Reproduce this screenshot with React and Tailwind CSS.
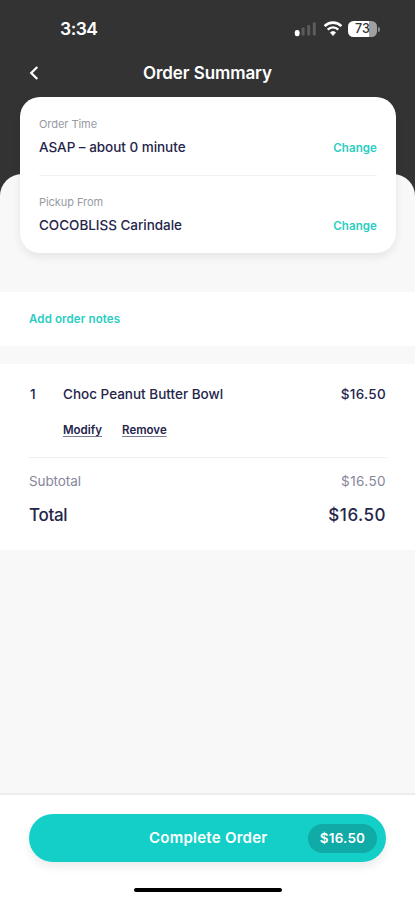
const SignalIcon = () => (
    <svg width="24" height="16" viewBox="0 0 24 16" fill="#5c5c5c">
        <rect x="0.8" y="9" width="4.8" height="6.2" rx="2.2" fill="#fff" />
        <rect x="7.6" y="6.5" width="3" height="8" rx="1" />
        <rect x="13.2" y="4" width="3" height="10.5" rx="1" />
        <rect x="18.8" y="1.2" width="3" height="13.3" rx="1" />
    </svg>
);

const WifiIcon = () => (
    <svg width="20" height="16" viewBox="0 0 20 16" fill="none" stroke="#fff">
        <path d="M1.6 5.1a12 12 0 0 1 16.8 0" strokeWidth="2.6" />
        <path d="M4.7 8.6a7.5 7.5 0 0 1 10.6 0" strokeWidth="2.4" />
        <path
            d="M10 14.7 7.2 11.6a4 4 0 0 1 5.6 0Z"
            fill="#fff"
            strokeWidth="0.4"
        />
    </svg>
);

const BatteryIcon = () => (
    <div className="flex items-center">
        <div className="flex h-4 w-[29px] items-center justify-center rounded-[5.5px] bg-linear-to-r from-white from-73% to-[#a0a0a0] to-73% text-[12.5px] font-medium leading-4 text-[#333333]">
            73
        </div>
        <div className="ml-px h-[5px] w-[2px] rounded-r-full bg-[#8b8b8b]" />
    </div>
);

const StatusBar = () => (
    <div className="flex h-[58px] items-center justify-between pl-[60px] pr-[35px] text-white">
        <span className="text-[17.5px] font-semibold leading-6 tracking-[-0.5px]">
            3:34
        </span>
        <div className="flex items-center">
            <SignalIcon />
            <div className="mx-[5px]">
                <WifiIcon />
            </div>
            <BatteryIcon />
        </div>
    </div>
);

const OrderDetail = ({ label, value }) => (
    <div className="flex h-[78px] items-end justify-between pb-[18px]">
        <div>
            <p className="text-[11px] leading-4 tracking-[-0.05px] text-[#969aa3]">
                {label}
            </p>
            <p className="mt-[5px] text-[13.5px] font-medium leading-5 tracking-[-0.03px] text-[#25254a]">
                {value}
            </p>
        </div>
        <button className="text-[11.5px] font-semibold leading-[17px] tracking-[0.1px] text-[#2acdc1]">
            Change
        </button>
    </div>
);

const App = () => {
    return (
        <div className="flex h-[900px] w-full flex-col overflow-hidden bg-[#333333] font-['Inter','Liberation_Sans',sans-serif]">
            <StatusBar />
            <div className="relative flex h-[30px] items-center justify-center text-white">
                <svg
                    className="absolute left-[28px] top-[7px]"
                    width="12"
                    height="16"
                    viewBox="0 0 12 16"
                    fill="none"
                    stroke="#fff"
                    strokeWidth="2.2"
                >
                    <path d="M9.3 2 3.2 8l6.1 6" />
                </svg>
                <h1 className="text-[17px] font-semibold leading-6 tracking-[-0.08px]">
                    Order Summary
                </h1>
            </div>

            <main className="mt-[86px] flex flex-1 flex-col rounded-t-[22px] bg-[#f8f8f8]">
                <section className="mx-5 mr-[19px] -mt-[77px] h-[156px] shrink-0 rounded-[20px] bg-white px-[19px] shadow-[0_4px_8px_rgba(0,0,0,0.08)]">
                    <OrderDetail
                        label="Order Time"
                        value="ASAP – about 0 minute"
                    />
                    <hr className="border-[#f1f1f1]" />
                    <div className="-mt-px">
                        <OrderDetail
                            label="Pickup From"
                            value="COCOBLISS Carindale"
                        />
                    </div>
                </section>

                <section className="mt-[39px] flex h-[54px] items-center bg-white px-[29px]">
                    <button className="text-[11.5px] font-semibold leading-4 tracking-[0.13px] text-[#2acdc1]">
                        Add order notes
                    </button>
                </section>

                <section className="mt-[18px] h-[186px] bg-white px-7 text-[#25254a]">
                    <div className="flex h-[94px] border-b border-[#f0f0f0] pl-[2px] pr-px pt-5 text-[13.5px] font-medium leading-5">
                        <span className="w-[33px]">1</span>
                        <div className="flex-1">
                            <p>Choc Peanut Butter Bowl</p>
                            <div className="mt-[18px] flex gap-5 text-[11.5px] font-semibold leading-4">
                                <button className="underline decoration-[#25254a]/60 underline-offset-2">
                                    Modify
                                </button>
                                <button className="underline decoration-[#25254a]/60 underline-offset-2">
                                    Remove
                                </button>
                            </div>
                        </div>
                        <span className="tracking-[0.3px]">$16.50</span>
                    </div>
                    <div className="mt-[13px] flex justify-between px-px text-[13.5px] leading-5 text-[#85869b]">
                        <span className="tracking-[-0.1px]">Subtotal</span>
                        <span className="tracking-[0.4px]">$16.50</span>
                    </div>
                    <div className="mt-3 flex justify-between px-px text-[17px] font-medium leading-6">
                        <span className="tracking-[-0.3px]">Total</span>
                        <span className="tracking-[0.5px]">$16.50</span>
                    </div>
                </section>

                <footer className="mt-auto h-[107px] border-t-2 border-[#ededed] bg-white pt-[19px]">
                    <button className="mx-[29px] flex h-[48px] w-[357px] items-center justify-between rounded-full bg-[#13cfc8] pl-[120px] pr-[9px] text-white shadow-[0_5px_10px_rgba(0,0,0,0.08)]">
                        <span className="whitespace-nowrap text-[15px] font-semibold tracking-[0.25px]">
                            Complete Order
                        </span>
                        <span className="flex h-[29px] w-[69px] items-center justify-center rounded-full bg-[#10aaa7] text-[13.5px] font-semibold tracking-[0.2px]">
                            $16.50
                        </span>
                    </button>
                    <div className="mx-auto mt-[26px] h-1 w-[148px] rounded-full bg-black" />
                </footer>
            </main>
        </div>
    );
};

export default App;
